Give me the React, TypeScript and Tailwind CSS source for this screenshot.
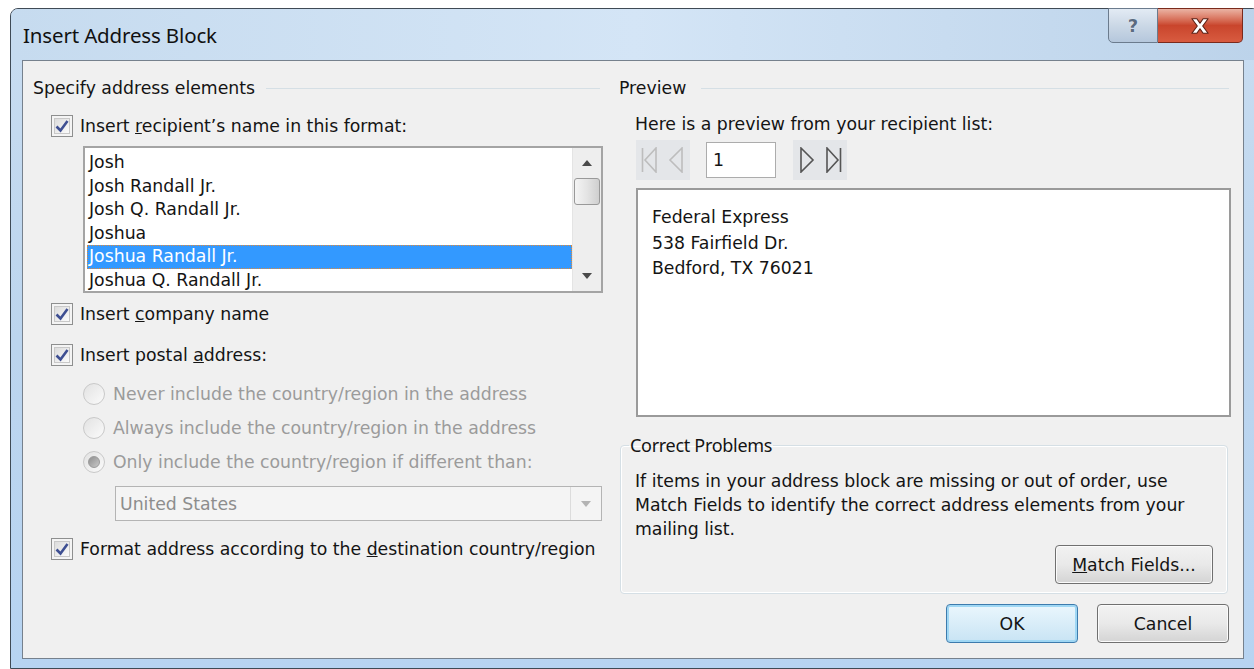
import React from "react";

const body = "font-['DejaVu_Sans',Verdana,sans-serif] text-[17.3px] leading-[24px] text-[#141414]";

function Check({ label }: { label: React.ReactNode }) {
  return (
    <div className="flex items-center h-[24px] ml-[18px]">
      <div className="w-[22px] h-[22px] border border-[#8e8f8f] bg-[#f4f4f4] p-[2px] shrink-0">
        <div className="w-full h-full border border-[#c8c8c8] bg-gradient-to-br from-[#dcdcdc] to-[#fbfbfb] flex items-center justify-center">
          <svg width="14" height="14" viewBox="0 0 14 14">
            <path d="M1.5 7.5 L5.5 11.5 L12.5 2" fill="none" stroke="#3e4f92" strokeWidth="2.6" strokeLinejoin="miter" />
          </svg>
        </div>
      </div>
      <span className="ml-[7px] whitespace-nowrap">{label}</span>
    </div>
  );
}

function Radio({ label, on }: { label: string; on?: boolean }) {
  return (
    <div className="flex items-center h-[24px] ml-[50px]">
      <div className="w-[22px] h-[22px] rounded-full border border-[#c9c9c9] bg-gradient-to-br from-[#e2e2e2] to-[#fbfbfb] flex items-center justify-center shrink-0">
        {on && (
          <div className="w-[12px] h-[12px] rounded-full bg-gradient-to-br from-[#8f8f8f] to-[#c9c9c9] border border-[#9a9a9a]" />
        )}
      </div>
      <span className="ml-[8px] whitespace-nowrap text-[#9b9b9b]">{label}</span>
    </div>
  );
}

function Btn({ children, def }: { children: React.ReactNode; def?: boolean }) {
  return (
    <div
      className={
        "h-[39px] rounded-[4px] border flex items-center justify-center " +
        (def
          ? "border-[#3d7bad] shadow-[inset_0_0_0_2px_#9fd7f4] bg-gradient-to-b from-[#eaf6fd] to-[#c8e4f4]"
          : "border-[#707070] shadow-[inset_0_0_0_1px_#fbfbfb] bg-gradient-to-b from-[#f2f2f2] via-[#e9e9e9] to-[#d4d4d4]")
      }
    >
      {children}
    </div>
  );
}

const names = [
  "Josh",
  "Josh Randall Jr.",
  "Josh Q. Randall Jr.",
  "Joshua",
  "Joshua Randall Jr.",
  "Joshua Q. Randall Jr.",
];

export default function App() {
  return (
    <div className={"w-[1254px] h-[669px] bg-white overflow-hidden pl-[10px] pt-[8px] " + body}>
      <div className="w-[1250px] h-[661px] rounded-t-[8px] border border-[#3f4a55] bg-gradient-to-b from-[#c9ddf1] via-[#bcd5ee] to-[#b7d4f2] flex flex-col">
        {/* title bar */}
        <div className="h-[51px] flex items-start bg-gradient-to-r from-[#c6dbef] via-[#d4e5f6] to-[#bcd3ea] rounded-t-[7px]">
          <div className="h-full flex items-center pl-[12px] font-['Noto_Sans',sans-serif] text-[20.5px] text-[#111] tracking-[-0.15px]">
            Insert Address Block
          </div>
          <div className="ml-auto mr-[16px] flex h-[35px] -mt-[1px]">
            <div className="w-[50px] h-full border border-[#6b7b8d] rounded-bl-[5px] bg-gradient-to-b from-[#e3ebf4] via-[#cbd8e6] to-[#b5c7dc] flex items-center justify-center">
              <span className="font-['DejaVu_Sans',sans-serif] font-bold text-[18px] text-[#5b6b80] [text-shadow:0_0_1px_#fff]">?</span>
            </div>
            <div className="w-[85px] h-full border border-l-0 border-[#7a2a1c] rounded-br-[5px] bg-gradient-to-b from-[#eab3a4] via-[#c9452c] to-[#d85b40] flex items-center justify-center">
              <svg width="22" height="18" viewBox="0 0 24 20">
                <path
                  d="M3 2 H8.5 L12 7 L15.5 2 H21 L15 10 L21 18 H15.5 L12 13 L8.5 18 H3 L9 10 Z"
                  fill="#fff"
                  stroke="#5a1e12"
                  strokeWidth="1.2"
                  strokeLinejoin="round"
                />
              </svg>
            </div>
          </div>
        </div>

        {/* client area */}
        <div className="ml-[11px] w-[1222px] h-[599px] border border-[#76818d] bg-[#f0f0f0] flex pt-[15px] pl-[10px]">
          {/* left column */}
          <div className="w-[570px] flex flex-col">
            <div className="flex items-center h-[24px]">
              <span className="whitespace-nowrap">Specify address elements</span>
              <div className="flex-1 ml-[11px] mr-[3px] h-px bg-[#d5dfe5]" />
            </div>
            <div className="mt-[14px]">
              <Check label={<>Insert <u>r</u>ecipient’s name in this format:</>} />
            </div>
            <div className="mt-[8px] ml-[50px] w-[520px] h-[147px] border-2 border-[#a4a4a4] bg-white flex">
              <div className="flex-1 pl-[2px] pt-[3px]">
                {names.map((n, i) =>
                  i === 4 ? (
                    <div key={n} className="h-[23.5px] leading-[23.5px] pl-[2px] bg-[#3399ff] text-white outline-1 outline-dotted outline-[#e08a3a] -outline-offset-1">
                      {n}
                    </div>
                  ) : (
                    <div key={n} className="h-[23.5px] leading-[23.5px] pl-[2px]">
                      {n}
                    </div>
                  )
                )}
              </div>
              <div className="w-[29px] bg-[#eeeeee] border-l border-[#e4e4e4] flex flex-col items-center">
                <div className="h-[30px] flex items-center justify-center">
                  <svg width="10" height="6" viewBox="0 0 10 6"><path d="M0 6 L5 0 L10 6 Z" fill="#4a4a4a" /></svg>
                </div>
                <div className="w-[26px] h-[27px] rounded-[3px] border border-[#999] bg-gradient-to-r from-[#f4f4f4] via-[#e4e4e4] to-[#cfcfcf]" />
                <div className="flex-1" />
                <div className="h-[30px] flex items-center justify-center">
                  <svg width="10" height="6" viewBox="0 0 10 6"><path d="M0 0 L10 0 L5 6 Z" fill="#4a4a4a" /></svg>
                </div>
              </div>
            </div>
            <div className="mt-[9px]">
              <Check label={<>Insert <u>c</u>ompany name</>} />
            </div>
            <div className="mt-[17px]">
              <Check label={<>Insert postal <u>a</u>ddress:</>} />
            </div>
            <div className="mt-[15px] flex flex-col gap-[10px]">
              <Radio label="Never include the country/region in the address" />
              <Radio label="Always include the country/region in the address" />
              <Radio label="Only include the country/region if different than:" on />
            </div>
            <div className="mt-[12px] ml-[82px] w-[487px] h-[35px] border border-[#b4b4b4] bg-[#f4f4f4] flex">
              <div className="flex-1 flex items-center pl-[4px] text-[#8d8d8d]">United States</div>
              <div className="w-[31px] border-l border-[#dcdcdc] flex items-center justify-center">
                <svg width="10" height="6" viewBox="0 0 10 6"><path d="M0 0 L10 0 L5 6 Z" fill="#b3b3b3" /></svg>
              </div>
            </div>
            <div className="mt-[16px]">
              <Check label={<>Format address according to the <u>d</u>estination country/region</>} />
            </div>
          </div>

          {/* right column */}
          <div className="ml-[16px] w-[612px] flex flex-col">
            <div className="flex items-center h-[24px]">
              <span className="whitespace-nowrap">Preview</span>
              <div className="flex-1 ml-[15px] mr-[2px] h-px bg-[#d5dfe5]" />
            </div>
            <div className="mt-[12px] pl-[16px] whitespace-nowrap">Here is a preview from your recipient list:</div>
            <div className="mt-[4px] ml-[17px] h-[40px] flex items-center">
              <div className="w-[54px] h-[40px] bg-[#e4e6e9] flex items-center">
                <svg className="ml-[5px]" width="16" height="26" viewBox="0 0 16 26">
                  <path d="M1.5 1 V25 M15 1 L4 13 L15 25 Z" fill="none" stroke="#bdbdbd" strokeWidth="1.6" />
                </svg>
                <svg className="ml-[11px]" width="16" height="26" viewBox="0 0 16 26">
                  <path d="M14 1 L2 13 L14 25 Z" fill="none" stroke="#bdbdbd" strokeWidth="1.6" />
                </svg>
              </div>
              <div className="ml-[16px] w-[70px] h-[36px] border border-[#acacac] bg-white flex items-center pl-[6px]">1</div>
              <div className="ml-[17px] w-[54px] h-[40px] bg-[#e4e6e9] flex items-center">
                <svg className="ml-[6px]" width="16" height="26" viewBox="0 0 16 26">
                  <path d="M2 1 L14 13 L2 25 Z" fill="none" stroke="#555" strokeWidth="1.6" />
                </svg>
                <svg className="ml-[11px]" width="16" height="26" viewBox="0 0 16 26">
                  <path d="M1 1 L12 13 L1 25 Z M14.5 1 V25" fill="none" stroke="#555" strokeWidth="1.6" />
                </svg>
              </div>
            </div>
            <div className="mt-[8px] ml-[17px] w-[595px] h-[229px] border-2 border-[#9a9a9a] bg-white pl-[14px] pt-[15px] leading-[25.5px]">
              <div>Federal Express</div>
              <div>538 Fairfield Dr.</div>
              <div>Bedford, TX 76021</div>
            </div>
            <fieldset className="mt-[16px] ml-[1px] w-[608px] rounded-[4px] border border-[#d5dfe5] shadow-[inset_0_0_0_1px_#fff] px-[14px] pb-[9px]">
              <legend className="ml-[-6px] px-[1px] font-['Noto_Sans',sans-serif] text-[18px] leading-[24px] tracking-[-0.3px]">
                Correct Problems
              </legend>
              <div className="mt-[12px]">
                If items in your address block are missing or out of order, use
                <br />
                Match Fields to identify the correct address elements from your
                <br />
                mailing list.
              </div>
              <div className="mt-[4px] flex justify-end">
                <div className="w-[158px]">
                  <Btn>
                    <span><u>M</u>atch Fields...</span>
                  </Btn>
                </div>
              </div>
            </fieldset>
            <div className="mt-[10px] flex justify-end gap-[19px] pr-[2px]">
              <div className="w-[132px]">
                <Btn def>OK</Btn>
              </div>
              <div className="w-[132px]">
                <Btn>Cancel</Btn>
              </div>
            </div>
          </div>
        </div>
      </div>
    </div>
  );
}
